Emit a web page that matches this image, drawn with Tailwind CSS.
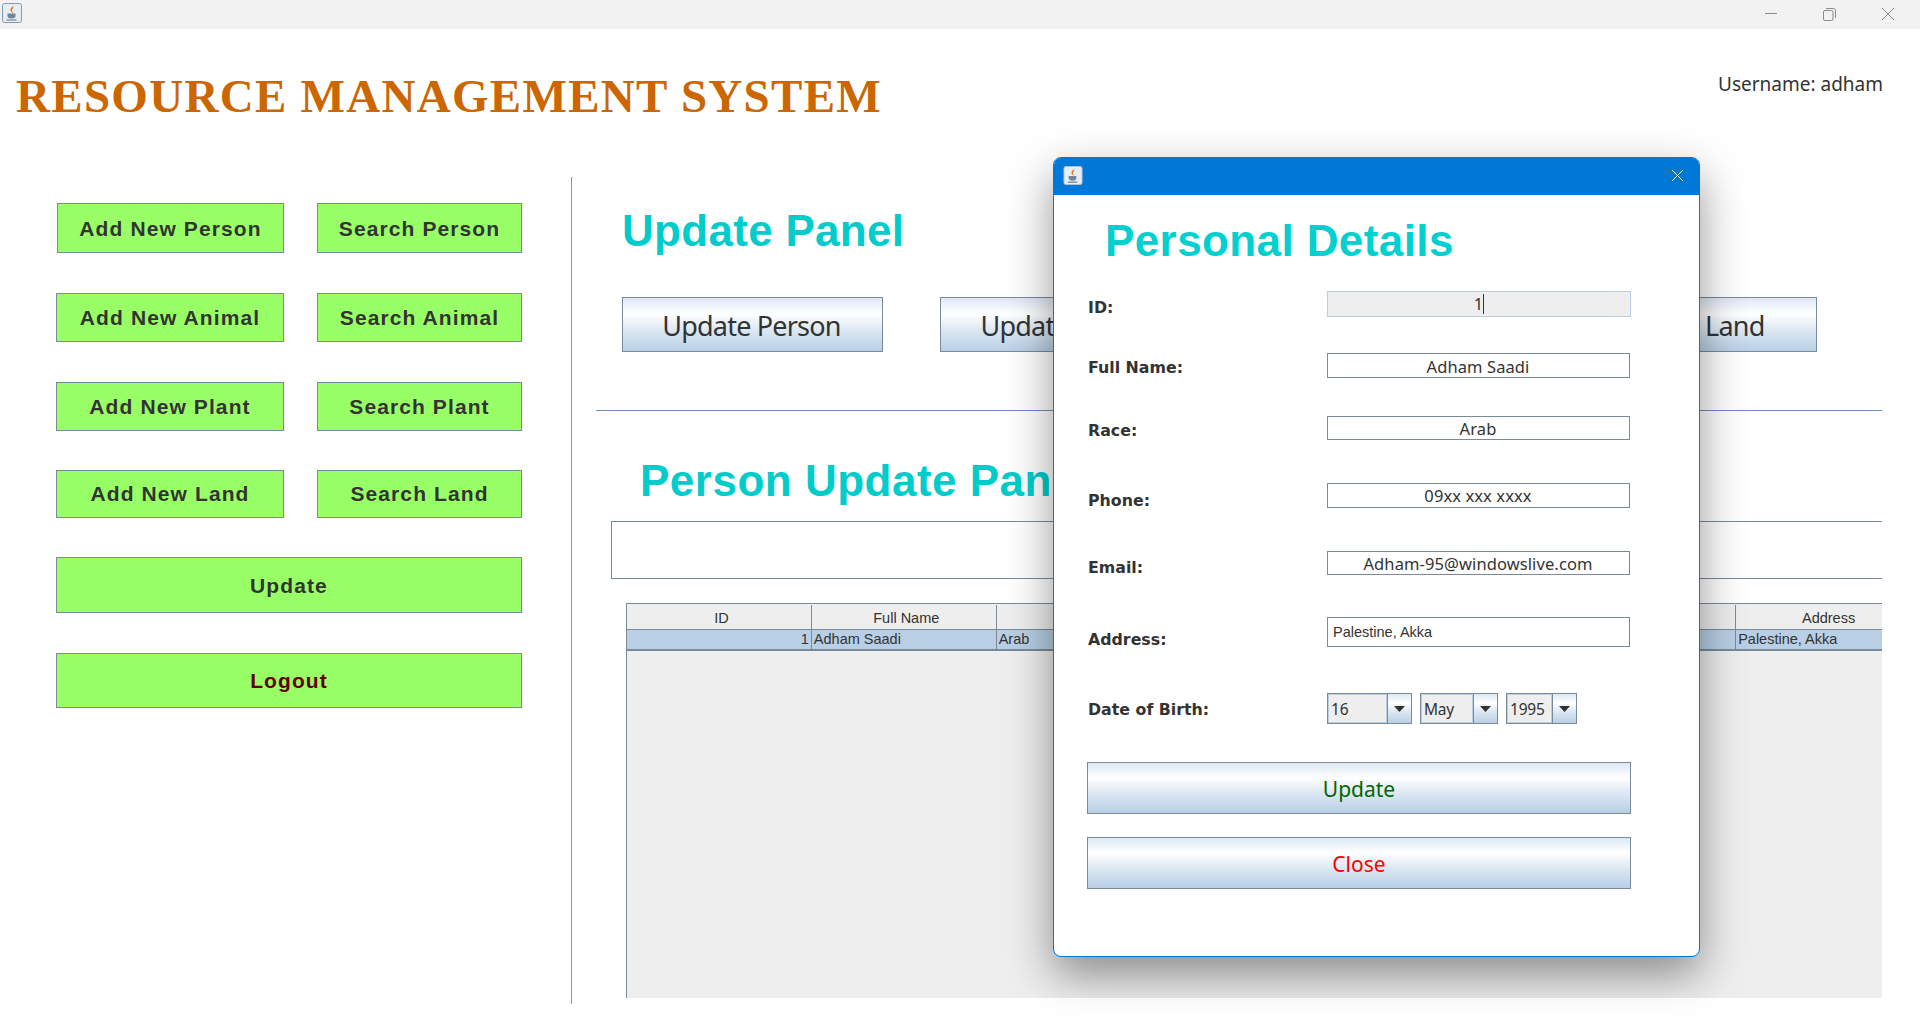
<!DOCTYPE html>
<html lang="en">
<head>
<meta charset="UTF-8">
<title>Resource Management System</title>
<script src="https://cdn.jsdelivr.net/npm/@tailwindcss/browser@4"></script>
</head>
<body class="bg-white">
<div class="relative w-[1920px] h-[1016px] overflow-hidden bg-white text-[#333333] font-['Noto_Sans',sans-serif]">

  <!-- window title bar -->
  <div class="h-[29px] bg-[#f2f2f2] flex items-center pl-[2px] pb-[3px]">
    <svg width="20" height="20" viewBox="0 0 20 20">
      <rect x="0.5" y="0.5" width="19" height="19" rx="2" fill="#e8edf2" stroke="#7f9ab3"/>
      <path d="M11 2.500c1.500 2.500-2 3.500-.8 6 .3.7 1.300 1.500 1.300 1.500-2.500-.5-3.800-2.500-2.800-4.500.7-1.200 2.300-1.500 2.300-3z" fill="#e8762a"/>
      <path d="M5.500 10.500h8v2.500c0 1.800-1.800 2.500-4 2.500s-4-.7-4-2.500z" fill="#6f869c"/>
      <path d="M4.500 17h10" stroke="#6f869c" stroke-width="1.200"/>
    </svg>
    <svg class="absolute left-[1765px] top-[13px]" width="12" height="1"><rect width="12" height="1" fill="#8a8a8a"/></svg>
    <svg class="absolute left-[1823px] top-[8px]" width="13" height="13" viewBox="0 0 13 13" fill="none" stroke="#8a8a8a"><rect x="0.5" y="2.500" width="9.500" height="10" rx="1.500"/><path d="M3 .5h7.500a2 2 0 0 1 2 2V10"/></svg>
    <svg class="absolute left-[1882px] top-[8px]" width="12" height="12" viewBox="0 0 12 12" stroke="#8a8a8a"><path d="M0 0l12 12M12 0L0 12"/></svg>
  </div>

  <!-- header -->
  <div class="h-[148px] flex justify-between">
    <h1 class="ml-[16px] mt-[37px] h-[60px] leading-[60px] text-[47px] font-bold text-[#cc6600] font-['Liberation_Serif',serif] tracking-[1.300px] whitespace-nowrap">RESOURCE MANAGEMENT SYSTEM</h1>
    <div class="mr-[37px] mt-[41px] text-[19px] leading-[28px]">Username: adham</div>
  </div>

  <div class="flex">
    <!-- left menu -->
    <div class="w-[572px] h-[827px] border-r border-[#7f97c0] pl-[56px] pt-[26px] font-['Liberation_Sans',sans-serif] font-bold text-[21px] tracking-[1.100px]">
      <div class="flex gap-[33px]">
        <button class="ml-px w-[227px] h-[50px] pt-[2px] bg-[#99ff66] border border-[#7a8a99]">Add New Person</button>
        <button class="w-[205px] h-[50px] pt-[2px] bg-[#99ff66] border border-[#7a8a99]">Search Person</button>
      </div>
      <div class="mt-[40px] flex gap-[33px]">
        <button class="w-[228px] h-[49px] bg-[#99ff66] border border-[#7a8a99]">Add New Animal</button>
        <button class="w-[205px] h-[49px] bg-[#99ff66] border border-[#7a8a99]">Search Animal</button>
      </div>
      <div class="mt-[40px] flex gap-[33px]">
        <button class="w-[228px] h-[49px] bg-[#99ff66] border border-[#7a8a99]">Add New Plant</button>
        <button class="w-[205px] h-[49px] bg-[#99ff66] border border-[#7a8a99]">Search Plant</button>
      </div>
      <div class="mt-[39px] flex gap-[33px]">
        <button class="w-[228px] h-[48px] bg-[#99ff66] border border-[#7a8a99]">Add New Land</button>
        <button class="w-[205px] h-[48px] bg-[#99ff66] border border-[#7a8a99]">Search Land</button>
      </div>
      <button class="block mt-[39px] w-[466px] h-[56px] pt-[2px] bg-[#99ff66] border border-[#7a8a99]">Update</button>
      <button class="block mt-[40px] w-[466px] h-[55px] bg-[#99ff66] border border-[#7a8a99] text-[#660000]">Logout</button>
    </div>

    <!-- update panel -->
    <div class="flex-1 min-w-0">
      <h2 class="ml-[50px] mt-[24px] h-[60px] leading-[60px] text-[44px] font-bold text-[#00cccc] font-['Liberation_Sans',sans-serif] tracking-[0.300px]">Update Panel</h2>
      <div class="ml-[50px] mt-[36px] w-[1195px] h-[55px] flex gap-[57px] text-[27px] tracking-[-0.800px]">
        <button class="shrink-0 w-[261px] pt-[4px] pr-[2px] border border-[#7a8a99] bg-[linear-gradient(#dde8f3_0%,#ffffff_30%,#dde8f3_60%,#b8cfe5_100%)]">Update Person</button>
        <button class="shrink-0 w-[261px] pt-[4px] pr-[2px] border border-[#7a8a99] bg-[linear-gradient(#dde8f3_0%,#ffffff_30%,#dde8f3_60%,#b8cfe5_100%)]">Update Animal</button>
        <button class="shrink-0 w-[261px] pt-[4px] border border-[#7a8a99] bg-[linear-gradient(#dde8f3_0%,#ffffff_30%,#dde8f3_60%,#b8cfe5_100%)]">Update Plant</button>
        <button class="shrink-0 w-[241px] pt-[4px] pr-[18px] border border-[#7a8a99] bg-[linear-gradient(#dde8f3_0%,#ffffff_30%,#dde8f3_60%,#b8cfe5_100%)] whitespace-nowrap">Update Land</button>
      </div>
      <div class="ml-[24px] mt-[58px] w-[1286px] h-px bg-[#6f8cc4]"></div>
      <h2 class="ml-[68px] mt-[40px] h-[60px] leading-[60px] text-[44px] font-bold text-[#00cccc] font-['Liberation_Sans',sans-serif] tracking-[0.500px]">Person Update Panel</h2>
      <div class="ml-[39px] mt-[10px] w-[1271px] h-[58px] border-y border-l border-[#7a8a99] bg-white"></div>
      <div class="ml-[54px] mt-[24px] w-[1256px] h-[395px] overflow-hidden border-t border-l border-[#7a8a99] bg-[#eeeeee] font-['Liberation_Sans',sans-serif] text-[14.500px]">
        <div class="w-[1294px] grid grid-cols-7 h-[25px] mt-px border-b border-[#7a8a99] leading-[27px] text-center">
          <div class="border-r border-[#7a8a99] pl-[5px]">ID</div>
          <div class="border-r border-[#7a8a99] pl-[5px]">Full Name</div>
          <div class="border-r border-[#7a8a99]">Race</div>
          <div class="border-r border-[#7a8a99]">Phone</div>
          <div class="border-r border-[#7a8a99]">Email</div>
          <div class="border-r border-[#7a8a99]">Date of Birth</div>
          <div>Address</div>
        </div>
        <div class="w-[1294px] grid grid-cols-7 h-[21px] border-b-2 border-[#7a8a99] bg-[#b8cfe5] leading-[19px] whitespace-nowrap">
          <div class="border-r border-[#7a8a99] text-right pr-[2px]">1</div>
          <div class="border-r border-[#7a8a99] pl-[2px]">Adham Saadi</div>
          <div class="border-r border-[#7a8a99] pl-[2px]">Arab</div>
          <div class="border-r border-[#7a8a99] pl-[2px]">09xx xxx xxxx</div>
          <div class="border-r border-[#7a8a99] pl-[2px] text-[13px]">Adham-95@windowslive.com</div>
          <div class="border-r border-[#7a8a99] pl-[2px]">16 May 1995</div>
          <div class="pl-[2px]">Palestine, Akka</div>
        </div>
      </div>
    </div>
  </div>

  <!-- dialog -->
  <div class="absolute left-[1053px] top-[157px] w-[647px] h-[800px] rounded-[8px] overflow-hidden bg-white border border-[#0078d7] shadow-[0_18px_45px_rgba(0,0,0,0.42)]">
    <div class="h-[37px] bg-[#0078d7] flex items-center justify-between pl-[9px] pr-[15px] pb-[2px]">
      <svg width="20" height="19" viewBox="0 0 20 20">
        <rect x="0.5" y="0.5" width="19" height="19" rx="2" fill="#e8edf2" stroke="#b5c4d2"/>
        <path d="M11 2.500c1.500 2.500-2 3.500-.8 6 .3.7 1.300 1.500 1.300 1.500-2.500-.5-3.800-2.500-2.800-4.500.7-1.200 2.300-1.500 2.300-3z" fill="#e8762a"/>
        <path d="M5.500 10.500h8v2.500c0 1.800-1.800 2.500-4 2.500s-4-.7-4-2.500z" fill="#6f869c"/>
        <path d="M4.500 17h10" stroke="#6f869c" stroke-width="1.200"/>
      </svg>
      <svg width="13" height="13" viewBox="0 0 13 13" stroke="#ffffff"><path d="M1 1l11 11M12 1L1 12"/></svg>
    </div>
    <div class="pl-[34px] pr-[66px]">
      <h2 class="ml-[17px] mt-[16px] h-[60px] leading-[60px] text-[44px] font-bold text-[#00d0d0] font-['Liberation_Sans',sans-serif] tracking-[0.400px]">Personal Details</h2>
      <div class="mt-[20px] flex items-center h-[26px]">
        <label class="w-[239px] pt-[8px] text-[15.800px] font-bold font-['DejaVu_Sans',sans-serif]">ID:</label>
        <div class="w-[304px] h-full flex items-center justify-center bg-[#eeeeee] border border-[#b8cfe5] text-[16.500px]">1<span class="w-px h-[20px] bg-[#333333]"></span></div>
      </div>
      <div class="mt-[36px] flex items-center h-[25px]">
        <label class="w-[239px] pt-[4px] text-[15.800px] font-bold font-['DejaVu_Sans',sans-serif]">Full Name:</label>
        <div class="w-[303px] h-full flex items-center justify-center pt-[3px] pr-px border border-[#7a8a99] text-[16.500px] tracking-[0.100px]">Adham Saadi</div>
      </div>
      <div class="mt-[38px] flex items-center h-[24px]">
        <label class="w-[239px] pt-[5px] text-[15.800px] font-bold font-['DejaVu_Sans',sans-serif]">Race:</label>
        <div class="w-[303px] h-full flex items-center justify-center pt-[3px] pr-px border border-[#7a8a99] text-[16.500px] tracking-[0.100px]">Arab</div>
      </div>
      <div class="mt-[43px] flex items-center h-[25px]">
        <label class="w-[239px] pt-[10px] text-[15.800px] font-bold font-['DejaVu_Sans',sans-serif]">Phone:</label>
        <div class="w-[303px] h-full flex items-center justify-center pt-[2px] pr-px border border-[#7a8a99] text-[16.500px] tracking-[0.100px]">09xx xxx xxxx</div>
      </div>
      <div class="mt-[43px] flex items-center h-[24px]">
        <label class="w-[239px] pt-[10px] text-[15.800px] font-bold font-['DejaVu_Sans',sans-serif]">Email:</label>
        <div class="w-[303px] h-full flex items-center justify-center pt-[3px] pr-px border border-[#7a8a99] text-[16.500px] tracking-[0.100px]">Adham-95@windowslive.com</div>
      </div>
      <div class="mt-[42px] flex items-center h-[30px]">
        <label class="w-[239px] pt-[16px] text-[15.800px] font-bold font-['DejaVu_Sans',sans-serif]">Address:</label>
        <div class="w-[303px] h-full flex items-center pl-[5px] pt-[2px] border border-[#7a8a99] text-[14.500px] font-['Liberation_Sans',sans-serif]">Palestine, Akka</div>
      </div>
      <div class="mt-[46px] flex items-center h-[31px]">
        <label class="w-[239px] pt-[2px] text-[15.800px] font-bold font-['DejaVu_Sans',sans-serif]">Date of Birth:</label>
        <div class="flex h-full text-[15.500px] tracking-[-0.200px]">
          <div class="w-[85px] h-full flex border border-[#7a8a99]">
            <span class="flex-1 bg-[#eeeeee] border border-[#b8cfe5] pl-[2px] leading-[28px]">16</span>
            <span class="w-[24px] flex items-center justify-center border-l border-[#7a8a99] bg-[linear-gradient(#dde8f3_0%,#ffffff_30%,#dde8f3_60%,#b8cfe5_100%)]"><svg width="11" height="6"><path d="M0 0h11L5.500 6z" fill="#333333"/></svg></span>
          </div>
          <div class="ml-[8px] w-[78px] h-full flex border border-[#7a8a99]">
            <span class="flex-1 bg-[#eeeeee] border border-[#b8cfe5] pl-[2px] leading-[28px]">May</span>
            <span class="w-[24px] flex items-center justify-center border-l border-[#7a8a99] bg-[linear-gradient(#dde8f3_0%,#ffffff_30%,#dde8f3_60%,#b8cfe5_100%)]"><svg width="11" height="6"><path d="M0 0h11L5.500 6z" fill="#333333"/></svg></span>
          </div>
          <div class="ml-[8px] w-[71px] h-full flex border border-[#7a8a99]">
            <span class="flex-1 bg-[#eeeeee] border border-[#b8cfe5] pl-[2px] leading-[28px]">1995</span>
            <span class="w-[24px] flex items-center justify-center border-l border-[#7a8a99] bg-[linear-gradient(#dde8f3_0%,#ffffff_30%,#dde8f3_60%,#b8cfe5_100%)]"><svg width="11" height="6"><path d="M0 0h11L5.500 6z" fill="#333333"/></svg></span>
          </div>
        </div>
      </div>
      <button class="block mt-[38px] -ml-px w-[544px] h-[52px] pt-[3px] border border-[#7a8a99] text-[21px] text-[#006600] bg-[linear-gradient(#dde8f3_0%,#ffffff_30%,#dde8f3_60%,#b8cfe5_100%)]">Update</button>
      <button class="block mt-[23px] -ml-px w-[544px] h-[52px] pt-[3px] border border-[#7a8a99] text-[21px] text-[#ff0000] bg-[linear-gradient(#dde8f3_0%,#ffffff_30%,#dde8f3_60%,#b8cfe5_100%)]">Close</button>
    </div>
  </div>

  <!-- strip under the table: the dialog's shadow is fainter here -->
  <div class="absolute left-[572px] right-0 top-[998px] h-[18px] bg-white/55"></div>
</div>
</body>
</html>
